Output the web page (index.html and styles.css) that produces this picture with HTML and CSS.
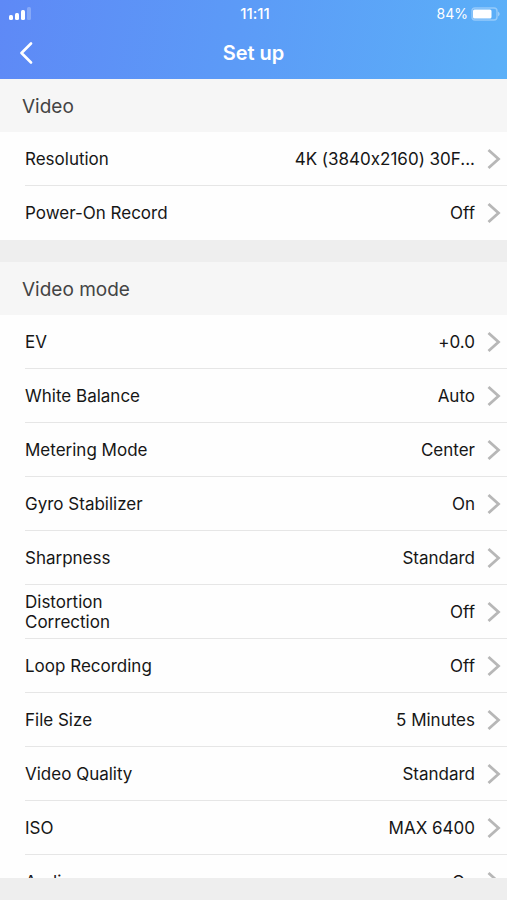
FILE: index.html
```html
<!DOCTYPE html>
<html lang="en">
<head>
<meta charset="utf-8">
<meta name="viewport" content="width=device-width, initial-scale=1">
<title>Set up</title>
<link rel="stylesheet" href="styles.css">
</head>
<body>
<svg class="symbols" aria-hidden="true">
  <symbol id="chevron" viewBox="0 0 14 22"><path d="M1.5 2 11.5 11 1.5 20" fill="none" stroke="currentColor" stroke-width="2.8"/></symbol>
</svg>
<header class="top">
  <div class="status">
    <svg class="signal" viewBox="0 0 24 14" aria-hidden="true">
      <rect x="0" y="8" width="4" height="5" rx="1.5"/>
      <rect x="6" y="6" width="4" height="7" rx="1.5"/>
      <rect x="12" y="3" width="4" height="10" rx="1.5"/>
      <rect x="18" y="0" width="4" height="13" rx="1.5" opacity=".25"/>
    </svg>
    <span class="time">11:11</span>
    <span class="power">84%
      <svg class="battery" viewBox="0 0 30 14" aria-hidden="true">
        <rect x="1" y="1" width="25" height="12" rx="3" fill="none" stroke="#fff" stroke-opacity=".35" stroke-width="1.4"/>
        <rect x="2" y="2.5" width="18.5" height="9" rx="1.5"/>
        <path d="M27 4.5Q30.5 7 27 9.5Z" opacity=".4"/>
      </svg>
    </span>
  </div>
  <nav class="bar">
    <button class="back" type="button" aria-label="Back">
      <svg viewBox="0 0 14 22" aria-hidden="true"><path d="M12 1.5 2.5 11 12 20.5" fill="none" stroke="#fff" stroke-width="2.6" stroke-linecap="round" stroke-linejoin="round"/></svg>
    </button>
    <h1>Set up</h1>
  </nav>
</header>
<main class="content">
  <section class="group">
    <h2>Video</h2>
    <button class="row" type="button"><span class="label">Resolution</span><span class="value">4K (3840x2160) 30F...</span><svg class="chevron"><use href="#chevron"/></svg></button>
    <button class="row" type="button"><span class="label">Power-On Record</span><span class="value">Off</span><svg class="chevron"><use href="#chevron"/></svg></button>
  </section>
  <section class="group">
    <h2>Video mode</h2>
    <button class="row" type="button"><span class="label">EV</span><span class="value">+0.0</span><svg class="chevron"><use href="#chevron"/></svg></button>
    <button class="row" type="button"><span class="label">White Balance</span><span class="value">Auto</span><svg class="chevron"><use href="#chevron"/></svg></button>
    <button class="row" type="button"><span class="label">Metering Mode</span><span class="value">Center</span><svg class="chevron"><use href="#chevron"/></svg></button>
    <button class="row" type="button"><span class="label">Gyro Stabilizer</span><span class="value">On</span><svg class="chevron"><use href="#chevron"/></svg></button>
    <button class="row" type="button"><span class="label">Sharpness</span><span class="value">Standard</span><svg class="chevron"><use href="#chevron"/></svg></button>
    <button class="row" type="button"><span class="label">Distortion Correction</span><span class="value">Off</span><svg class="chevron"><use href="#chevron"/></svg></button>
    <button class="row" type="button"><span class="label">Loop Recording</span><span class="value">Off</span><svg class="chevron"><use href="#chevron"/></svg></button>
    <button class="row" type="button"><span class="label">File Size</span><span class="value">5 Minutes</span><svg class="chevron"><use href="#chevron"/></svg></button>
    <button class="row" type="button"><span class="label">Video Quality</span><span class="value">Standard</span><svg class="chevron"><use href="#chevron"/></svg></button>
    <button class="row" type="button"><span class="label">ISO</span><span class="value">MAX 6400</span><svg class="chevron"><use href="#chevron"/></svg></button>
    <button class="row" type="button"><span class="label">Audio</span><span class="value">On</span><svg class="chevron"><use href="#chevron"/></svg></button>
  </section>
</main>
</body>
</html>
```
FILE: styles.css
```css
* {
  box-sizing: border-box;
}

body {
  margin: 0;
  height: 100vh;
  padding-bottom: 22px;
  display: flex;
  flex-direction: column;
  background: #eeeeee;
  color: #161616;
  font-family: Inter, "Liberation Sans", sans-serif;
  font-size: 17px;
  font-feature-settings: "calt" 0;
  line-height: 20px;
}

button {
  border: 0;
  padding: 0;
  background: none;
  color: inherit;
  font: inherit;
  font-feature-settings: inherit;
}

.symbols {
  position: absolute;
  width: 0;
  height: 0;
}

.top {
  flex: none;
  background: linear-gradient(100deg, #5e89f6, #5c9af7 45%, #5bb0f8);
  color: #fff;
}

.status {
  display: grid;
  grid-template-columns: 1fr auto 1fr;
  align-items: center;
  height: 27px;
  padding: 0 6px 0 9px;
  font-size: 14px;
}

.status svg {
  display: block;
  fill: #fff;
}

.signal {
  width: 24px;
  height: 14px;
}

.time {
  font-size: 15px;
  font-weight: 500;
}

.power {
  display: flex;
  justify-content: flex-end;
  align-items: center;
  gap: 3px;
}

.battery {
  width: 30px;
  height: 14px;
}

.bar {
  display: grid;
  grid-template-columns: 54px 1fr 54px;
  align-items: center;
  height: 52px;
}

.back {
  height: 52px;
  padding-left: 19px;
}

.back svg {
  display: block;
  width: 14px;
  height: 22px;
}

h1 {
  margin: 0;
  font-size: 20px;
  font-weight: 600;
  text-align: center;
}

.content {
  flex: 1;
  min-height: 0;
  overflow-y: auto;
  scrollbar-width: none;
}

.group {
  background: #fefefe;
}

.group + .group {
  border-top: 22px solid #eeeeee;
}

h2 {
  margin: 0;
  padding: 18px 22px 15px;
  background: #f6f6f6;
  color: #444;
  font-size: 19px;
  font-weight: 400;
  line-height: 20px;
}

.row {
  display: flex;
  align-items: center;
  width: calc(100% - 25px);
  min-height: 54px;
  margin-left: 25px;
  padding-right: 6px;
  border-bottom: 1px solid #e6e6e6;
  text-align: left;
}

.row:last-child {
  border-bottom-color: transparent;
}

.label {
  flex: 0 1 150px;
}

.value {
  flex: 1;
  text-align: right;
  white-space: nowrap;
}

.chevron {
  flex: none;
  width: 14px;
  height: 22px;
  margin-left: 12px;
  color: #b7b7b7;
}
```
